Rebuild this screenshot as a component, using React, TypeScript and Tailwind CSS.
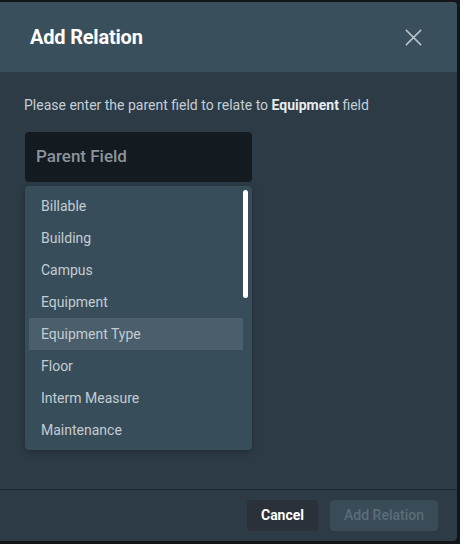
import React from "react";

const fields = [
  "Billable",
  "Building",
  "Campus",
  "Equipment",
  "Equipment Type",
  "Floor",
  "Interm Measure",
  "Maintenance",
];

const App: React.FC = () => {
  return (
    <div
      className="w-[460px] h-[544px] bg-[#121619] pt-[2px] pr-[3px]"
      style={{ fontFamily: "Roboto, 'Liberation Sans', sans-serif" }}
    >
      {/* Dialog */}
      <div className="w-[457px] h-[539px] bg-[#2c3b46] rounded-tr-[4px] rounded-br-[4px] flex flex-col overflow-hidden">
        {/* Header */}
        <div className="h-[70px] bg-[#3a4f5c] flex items-center justify-between pl-[30px] pr-[34px] shrink-0">
          <h2 className="text-[20px] font-bold text-white tracking-[-0.2px]">Add Relation</h2>
          <svg className="w-[19px] h-[19px] text-[#b9c4ca]" viewBox="0 0 20 20" fill="none" stroke="currentColor" strokeWidth={1.6}>
            <path d="M2 2l16 16M18 2L2 18" />
          </svg>
        </div>

        {/* Body */}
        <div className="flex-1 px-[24px] pt-[24px]">
          <p className="text-[14px] text-[#c5ced4] leading-[18px]">
            Please enter the parent field to relate to{" "}
            <span className="font-bold text-[#e6ebee]">Equipment</span> field
          </p>
          <div className="ml-[1px] mt-[18px] w-[227px]">
            <div className="h-[50px] bg-[#131a20] rounded-[4px] flex items-center px-[11px]">
              <span className="text-[17px] font-medium text-[#8b959c]">Parent Field</span>
            </div>
            <div className="relative mt-[4px] bg-[#384d5a] rounded-[4px] py-[4px] pl-[4px] pr-[9px] shadow-[0_2px_6px_rgba(0,0,0,0.25)]">
              {fields.map((f) => (
                <div
                  key={f}
                  className={
                    "h-[32px] flex items-center pl-[12px] text-[14px] text-[#c3ccd2] " +
                    (f === "Equipment Type" ? "bg-[#4a5e6b]" : "")
                  }
                >
                  {f}
                </div>
              ))}
              <div className="absolute right-[4px] top-[4px] w-[5px] h-[108px] rounded-full bg-white" />
            </div>
          </div>
        </div>

        {/* Footer */}
        <div className="h-[52px] border-t border-[#1e2a32] flex items-center justify-end gap-[12px] pr-[19px] shrink-0">
          <button className="h-[31px] w-[71px] rounded-[4px] bg-[#2b3138] text-white text-[14px] font-bold">
            Cancel
          </button>
          <button className="h-[31px] w-[108px] rounded-[4px] bg-[#394b57] text-[#5b6d79] text-[14px] font-medium">
            Add Relation
          </button>
        </div>
      </div>
    </div>
  );
};

export default App;
